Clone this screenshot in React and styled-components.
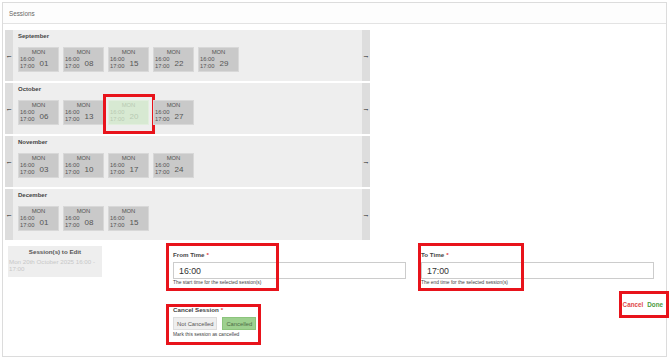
import styled, { createGlobalStyle } from "styled-components";

const GlobalStyle = createGlobalStyle`
    html, body {
        margin: 0;
        padding: 0;
        background: #ffffff;
        font-family: "Liberation Sans", Arial, sans-serif;
    }
`

const Panel = styled.div`
    margin: 2px 3px 0 2px;
    height: 355px;
    border: 1px solid #dcdcdc;
    box-sizing: border-box;
    background: #ffffff;
`

const PanelHeader = styled.div`
    height: 20px;
    padding-left: 6px;
    display: flex;
    align-items: center;
    font-size: 6.3px;
    color: #666666;
    border-bottom: 1px solid #e3e3e3;
    background: #fdfdfd;
`

const PanelBody = styled.div`
    padding: 6px 2px 0 2px;
`

const MonthList = styled.div`
    display: flex;
    flex-direction: column;
    gap: 2px;
    width: 365px;
`

const Month = styled.div`
    display: flex;
    height: 51px;
    background: #eeeeee;
`

const Arrow = styled.div`
    width: 8px;
    flex-shrink: 0;
    background: #dddddd;
    display: flex;
    align-items: center;
    justify-content: center;
    font-size: 7.5px;
    color: #222222;
`

const MonthContent = styled.div`
    flex: 1;
    padding: 1px 5px 0 5px;
`

const MonthTitle = styled.div`
    font-size: 6px;
    line-height: 9px;
    font-weight: bold;
    color: #444444;
    margin-top: 1px;
    margin-bottom: 6px;
`

const TileRow = styled.div`
    display: flex;
    gap: 4px;
`

const Tile = styled.div`
    width: 41px;
    height: 25px;
    box-sizing: border-box;
    border: 1px solid ${p => (p.$selected ? "#e2eede" : "#d8d8d8")};
    background: ${p => (p.$selected ? "#d7e9d2" : "#c9c9c9")};
    color: ${p => (p.$selected ? "#b7cab2" : "#555555")};
    display: flex;
    flex-direction: column;
    position: relative;
`

const Day = styled.div`
    text-align: center;
    font-size: 5.9px;
    line-height: 8px;
`

const TileBottom = styled.div`
    display: flex;
    align-items: center;
    padding-left: 1px;
`

const Times = styled.div`
    display: flex;
    flex-direction: column;
    font-size: 5.8px;
    line-height: 7px;
`

const DateNum = styled.div`
    font-size: 8px;
    margin-left: 5px;
    margin-top: 1px;
`

const Highlight = styled.div`
    position: absolute;
    border: 3px solid #e8131b;
    box-sizing: border-box;
    pointer-events: none;
    left: ${p => p.$left}px;
    top: ${p => p.$top}px;
    width: ${p => p.$width}px;
    height: ${p => p.$height}px;
`

const Form = styled.div`
    display: grid;
    grid-template-columns: 163px 248px 248px;
    row-gap: 14px;
    margin-top: 5px;
`

const EditBox = styled.div`
    margin-left: 3px;
    margin-top: 1px;
    width: 94px;
    height: 31px;
    box-sizing: border-box;
    background: #eeeeee;
    padding: 1px 1px 0 1px;
`

const EditTitle = styled.div`
    text-align: center;
    font-size: 6.2px;
    line-height: 9px;
    font-weight: bold;
    color: #555555;
    margin-bottom: 2px;
`

const EditText = styled.div`
    font-size: 6.2px;
    line-height: 7px;
    color: #c8c8c8;
`

const Field = styled.div`
    position: relative;
    padding: 5px 10px 0 5px;
`

const Label = styled.div`
    font-size: 6.2px;
    line-height: 10px;
    font-weight: bold;
    color: #444444;
    margin-bottom: 2px;

    span {
        color: #e04040;
        margin-left: 2px;
    }
`

const Input = styled.div`
    height: 17px;
    box-sizing: border-box;
    border: 1px solid #cccccc;
    background: #ffffff;
    display: flex;
    align-items: center;
    padding-left: 5px;
    font-size: 8.8px;
    color: #333333;
`

const Help = styled.div`
    font-size: 4.9px;
    line-height: 7px;
    color: #444444;
`

const Toggle = styled.div`
    display: flex;
    gap: 5px;
    margin-bottom: 1px;
`

const ToggleButton = styled.div`
    height: 13px;
    box-sizing: border-box;
    padding: 0 3px;
    display: flex;
    align-items: center;
    font-size: 5.8px;
    border: 1px solid ${p => (p.$active ? "#8cc47c" : "#dddddd")};
    background: ${p => (p.$active ? "#9dd08f" : "#eeeeee")};
    color: ${p => (p.$active ? "#4d6a45" : "#555555")};
`

const Actions = styled.div`
    position: relative;
    display: flex;
    justify-content: flex-end;
    gap: 4px;
    padding-right: 1px;
    font-size: 6.3px;
    line-height: 10px;
    font-weight: bold;
`

const ActionLink = styled.div`
    color: ${p => p.$color};
`

const months = [
    { name: "September", days: ["01", "08", "15", "22", "29"] },
    { name: "October", days: ["06", "13", "20", "27"], selected: "20" },
    { name: "November", days: ["03", "10", "17", "24"] },
    { name: "December", days: ["01", "08", "15"] },
]

const App = () => {
    return (
        <>
            <GlobalStyle />
            <Panel>
                <PanelHeader>Sessions</PanelHeader>
                <PanelBody>
                    <MonthList>
                        {months.map(m => (
                            <Month key={m.name}>
                                <Arrow>←</Arrow>
                                <MonthContent>
                                    <MonthTitle>{m.name}</MonthTitle>
                                    <TileRow>
                                        {m.days.map(d => (
                                            <Tile key={d} $selected={m.selected === d}>
                                                <Day>MON</Day>
                                                <TileBottom>
                                                    <Times>
                                                        <span>16:00</span>
                                                        <span>17:00</span>
                                                    </Times>
                                                    <DateNum>{d}</DateNum>
                                                </TileBottom>
                                                {m.selected === d && (
                                                    <Highlight $left={-6} $top={-7} $width={52} $height={40} />
                                                )}
                                            </Tile>
                                        ))}
                                    </TileRow>
                                </MonthContent>
                                <Arrow>→</Arrow>
                            </Month>
                        ))}
                    </MonthList>

                    <Form>
                        <EditBox>
                            <EditTitle>Session(s) to Edit</EditTitle>
                            <EditText>Mon 20th October 2025 16:00 - 17:00</EditText>
                        </EditBox>
                        <Field>
                            <Label>From Time<span>*</span></Label>
                            <Input>16:00</Input>
                            <Help>The start time for the selected session(s)</Help>
                            <Highlight $left={-2} $top={-2} $width={113} $height={48} />
                        </Field>
                        <Field>
                            <Label>To Time<span>*</span></Label>
                            <Input>17:00</Input>
                            <Help>The end time for the selected session(s)</Help>
                            <Highlight $left={2} $top={-2} $width={106} $height={48} />
                        </Field>
                        <div />
                        <Field>
                            <Label>Cancel Session<span>*</span></Label>
                            <Toggle>
                                <ToggleButton>Not Cancelled</ToggleButton>
                                <ToggleButton $active>Cancelled</ToggleButton>
                            </Toggle>
                            <Help>Mark this session as cancelled</Help>
                            <Highlight $left={-2} $top={4} $width={95} $height={41} />
                        </Field>
                        <Actions>
                            <ActionLink $color="#e04848">Cancel</ActionLink>
                            <ActionLink $color="#4a9a3c">Done</ActionLink>
                            <Highlight $left={203} $top={-9} $width={50} $height={27} />
                        </Actions>
                    </Form>
                </PanelBody>
            </Panel>
        </>
    )
}

export default App;
